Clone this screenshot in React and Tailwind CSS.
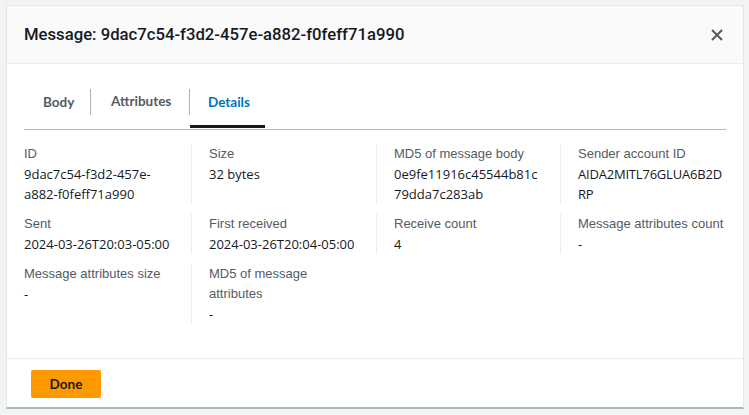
import React from "react";

const rows = [
  [
    { label: "ID", value: "9dac7c54-f3d2-457e-a882-f0feff71a990" },
    { label: "Size", value: "32 bytes" },
    { label: "MD5 of message body", value: "0e9fe11916c45544b81c79dda7c283ab" },
    { label: "Sender account ID", value: "AIDA2MITL76GLUA6B2DRP", tight: true },
  ],
  [
    { label: "Sent", value: "2024-03-26T20:03-05:00" },
    { label: "First received", value: "2024-03-26T20:04-05:00" },
    { label: "Receive count", value: "4" },
    { label: "Message attributes count", value: "-" },
  ],
  [
    { label: "Message attributes size", value: "-" },
    { label: "MD5 of message attributes", value: "-" },
  ],
];

function Cell({ item, index }) {
  const cls =
    index === 0
      ? "pr-[18px]"
      : index === 3
      ? "border-l border-[#eaeded] pl-[17px]"
      : "border-l border-[#eaeded] pl-[17px] pr-[18px]";
  return (
    <div className={cls}>
      <div className="text-[#545b64]">{item.label}</div>
      <div
        className={item.tight ? "text-[#16191f] break-words tracking-[-0.2px]" : "text-[#16191f] break-words"}
        style={{ fontFamily: '"Open Sans", "Liberation Sans", sans-serif' }}
      >
        {item.value}
      </div>
    </div>
  );
}

export default function App() {
  return (
    <div className="w-[749px] h-[415px] bg-[#f2f3f3] pl-[6px] pt-[5px] overflow-hidden" style={{ fontFamily: '"Liberation Sans", Arial, sans-serif' }}>
      <div className="w-[738px] h-[404px] bg-white border border-[#e3e6e6] border-b-2 border-b-[#aab7b8] flex flex-col">
        {/* Header */}
        <div className="h-[58px] shrink-0 bg-[#fafafa] border-b border-[#eaeded] flex items-center justify-between pl-[17px] pr-[19px]">
          <h2 className="text-[16.7px] text-[#16191f]" style={{ fontFamily: 'Roboto, "Liberation Sans", sans-serif', fontWeight: 500 }}>
            Message: 9dac7c54-f3d2-457e-a882-f0feff71a990
          </h2>
          <svg width="14" height="14" viewBox="0 0 14 14" className="text-[#545b64]">
            <path d="M2 2 L12 12 M12 2 L2 12" stroke="currentColor" strokeWidth="2" />
          </svg>
        </div>

        {/* Body */}
        <div className="flex-1 px-[17px] pt-[25px] text-[13px] leading-[20px]">
          <div className="flex border-b border-[#aab7b8] h-[41px] items-start" style={{ fontFamily: 'Lato, "Liberation Sans", sans-serif' }}>
            <div className="h-[39px] w-[67px]">
              <span className="pl-[19px] text-[13.5px] font-bold text-[#545b64] border-r border-[#aab7b8] h-[26px] flex items-center">Body</span>
            </div>
            <div className="h-[39px] w-[99px]">
              <span className="pl-[20px] text-[13.5px] font-bold text-[#545b64] border-r border-[#aab7b8] h-[26px] flex items-center pb-[3px]">Attributes</span>
            </div>
            <div className="h-[39px] w-[75px] border-b-[3px] border-[#16191f]">
              <span className="pl-[18px] text-[13.5px] font-bold text-[#0073bb] h-[26px] flex items-center">Details</span>
            </div>
          </div>

          <div className="mt-[14px] flex flex-col gap-[10px]">
            {rows.map((row, i) => (
              <div key={i} className="grid grid-cols-[167px_185px_184px_166px]">
                {row.map((item, j) => (
                  <Cell key={j} item={item} index={j} />
                ))}
              </div>
            ))}
          </div>
        </div>

        {/* Footer */}
        <div className="h-[49px] shrink-0 border-t border-[#eaeded] pl-[24px] pt-[11px]">
          <button className="w-[70px] h-[28px] bg-[#ff9900] rounded-[2px] text-[13.5px] font-bold text-[#16191f]" style={{ fontFamily: 'Lato, "Liberation Sans", sans-serif' }}>
            Done
          </button>
        </div>
      </div>
    </div>
  );
}
